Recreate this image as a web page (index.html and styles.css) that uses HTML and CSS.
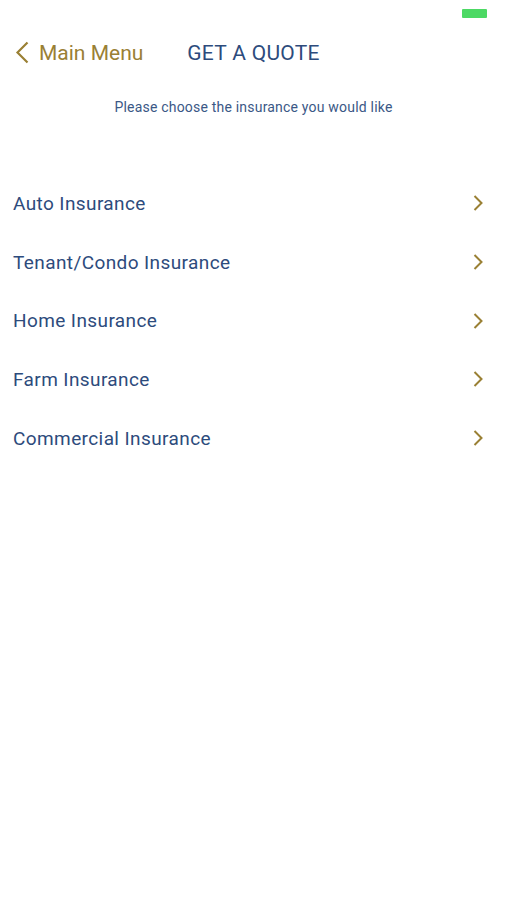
FILE: index.html
```html
<!DOCTYPE html>
<html lang="en">
<head>
    <meta charset="UTF-8">
    <meta name="viewport" content="width=device-width, initial-scale=1.0">
    <title>Get a Quote</title>
    <link rel="stylesheet" href="styles.css">
</head>
<body>

<div class="status-bar">
    <span class="battery"></span>
</div>

<div class="nav-bar">
    <a class="back" href="#">
        <svg class="back-icon" width="14" height="23" viewBox="0 0 14 23">
            <path d="M12.5 1.5 L2.5 11.5 L12.5 21.5" fill="none" stroke="#9a8034" stroke-width="2.2"/>
        </svg>
        <span>Main Menu</span>
    </a>
    <h1 class="title">GET A QUOTE</h1>
    <div></div>
</div>

<p class="subtitle">Please choose the insurance you would like</p>

<!-- insurance types -->
<ul class="menu">
    <li class="menu-item"><span>Auto Insurance</span><svg class="chevron" width="10" height="16" viewBox="0 0 10 16"><path d="M1.5 1 L8.5 8 L1.5 15" fill="none" stroke="#9a8034" stroke-width="2"/></svg></li>
    <li class="menu-item"><span>Tenant/Condo Insurance</span><svg class="chevron" width="10" height="16" viewBox="0 0 10 16"><path d="M1.5 1 L8.5 8 L1.5 15" fill="none" stroke="#9a8034" stroke-width="2"/></svg></li>
    <li class="menu-item"><span>Home Insurance</span><svg class="chevron" width="10" height="16" viewBox="0 0 10 16"><path d="M1.5 1 L8.5 8 L1.5 15" fill="none" stroke="#9a8034" stroke-width="2"/></svg></li>
    <li class="menu-item"><span>Farm Insurance</span><svg class="chevron" width="10" height="16" viewBox="0 0 10 16"><path d="M1.5 1 L8.5 8 L1.5 15" fill="none" stroke="#9a8034" stroke-width="2"/></svg></li>
    <li class="menu-item"><span>Commercial Insurance</span><svg class="chevron" width="10" height="16" viewBox="0 0 10 16"><path d="M1.5 1 L8.5 8 L1.5 15" fill="none" stroke="#9a8034" stroke-width="2"/></svg></li>
</ul>

</body>
</html>
```

FILE: styles.css
```css
body {
    font-family: Roboto, "Liberation Sans", sans-serif;
    background-color: #ffffff;
    margin: 0;
    color: #2d4b7c;
}
.status-bar {
    height: 27px;
    display: flex;
    justify-content: flex-end;
    align-items: flex-start;
    padding-right: 20px;
}
.battery {
    display: block;
    width: 25px;
    height: 9px;
    margin-top: 9px;
    background-color: #4cd964;
    border-radius: 1px;
}
.nav-bar {
    display: grid;
    grid-template-columns: 1fr auto 1fr;
    align-items: center;
    height: 51px;
}
.back {
    display: flex;
    align-items: center;
    padding-left: 15px;
    color: #9a8034;
    text-decoration: none;
    font-size: 21px;
}
.back-icon {
    margin-right: 10px;
}
.title {
    margin: 0;
    font-size: 21px;
    font-weight: 400;
    letter-spacing: 0.3px;
    color: #2d4b7c;
}
.subtitle {
    margin: 21px 0 0;
    text-align: center;
    font-size: 14px;
    letter-spacing: 0.2px;
    color: #3b5886;
}
.menu {
    list-style: none;
    margin: 59px 0 0;
    padding: 0;
}
.menu-item {
    display: flex;
    justify-content: space-between;
    align-items: center;
    height: 58.7px;
    padding: 0 24px 0 13px;
    font-size: 19px;
    letter-spacing: 0.4px;
}
```
